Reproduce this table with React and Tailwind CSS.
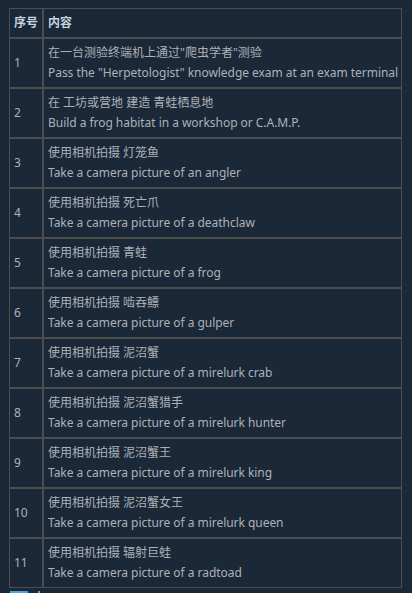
const ROWS = [
  ['在一台测验终端机上通过"爬虫学者"测验', 'Pass the "Herpetologist" knowledge exam at an exam terminal'],
  ["在 工坊或营地 建造 青蛙栖息地", "Build a frog habitat in a workshop or C.A.M.P."],
  ["使用相机拍摄 灯笼鱼", "Take a camera picture of an angler"],
  ["使用相机拍摄 死亡爪", "Take a camera picture of a deathclaw"],
  ["使用相机拍摄 青蛙", "Take a camera picture of a frog"],
  ["使用相机拍摄 啮吞鳔", "Take a camera picture of a gulper"],
  ["使用相机拍摄 泥沼蟹", "Take a camera picture of a mirelurk crab"],
  ["使用相机拍摄 泥沼蟹猎手", "Take a camera picture of a mirelurk hunter"],
  ["使用相机拍摄 泥沼蟹王", "Take a camera picture of a mirelurk king"],
  ["使用相机拍摄 泥沼蟹女王", "Take a camera picture of a mirelurk queen"],
  ["使用相机拍摄 辐射巨蛙", "Take a camera picture of a radtoad"],
];

const cell = "border border-[#4d4d4d] px-[4px] py-[4px] align-middle";

export default function App() {
  return (
    <div
      className="min-h-screen bg-[#1b2838] pt-[8px] pl-[9px] text-[12px] leading-[20px] text-[#acb2b8]"
      style={{ fontFamily: '"Noto Sans", "Noto Sans CJK SC", sans-serif' }}
    >
      <table className="w-[393px] border-separate border-spacing-0 table-fixed">
        <colgroup>
          <col className="w-[34px]" />
          <col />
        </colgroup>
        <thead>
          <tr>
            <th className={`${cell} text-left font-bold text-[#c6d4df]`}>序号</th>
            <th className={`${cell} text-left font-bold text-[#c6d4df]`}>内容</th>
          </tr>
        </thead>
        <tbody>
          {ROWS.map(([zh, en], i) => (
            <tr key={i}>
              <td className={cell}>{i + 1}</td>
              <td className={`${cell} whitespace-nowrap`}>
                <div>{zh}</div>
                <div className="tracking-[-0.04px]">{en}</div>
              </td>
            </tr>
          ))}
        </tbody>
      </table>

      {/* top edge of whatever follows the table */}
      <div className="mt-[3px] flex items-start">
        <div className="ml-[1px] h-[4px] w-[18px] bg-[#4fa3e0]" />
        <div className="ml-[10px] h-[4px] w-[2px] bg-[#4fa3e0]" />
      </div>
    </div>
  );
}
